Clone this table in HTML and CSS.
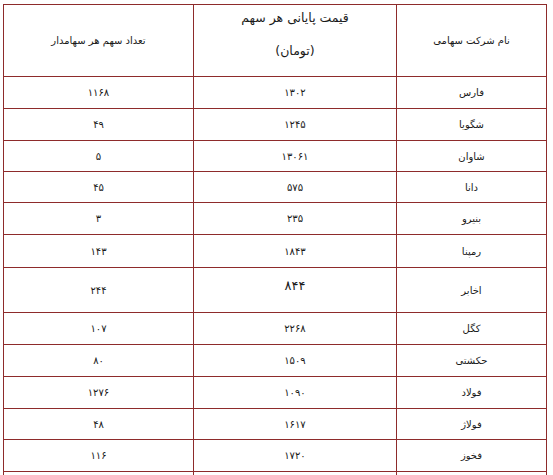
FILE: index.html
```html
<!DOCTYPE html>
<html lang="fa" dir="rtl">
<head>
<meta charset="utf-8">
<link rel="stylesheet" href="styles.css">
</head>
<body>
<table class="grid">
  <colgroup>
    <col class="c-name">
    <col class="c-price">
    <col class="c-count">
  </colgroup>
  <thead>
    <tr class="head">
      <th>نام شرکت سهامی</th>
      <th class="big">
        <p class="l1">قیمت پایانی هر سهم</p>
        <p class="l2">(تومان)</p>
      </th>
      <th>تعداد سهم هر سهامدار</th>
    </tr>
  </thead>
  <tbody>
    <tr class="r32"><td>فارس</td><td class="num">۱۳۰۲</td><td class="num">۱۱۶۸</td></tr>
    <tr class="r32"><td>شگویا</td><td class="num">۱۲۴۵</td><td class="num">۴۹</td></tr>
    <tr class="r31"><td>شاوان</td><td class="num">۱۳۰۶۱</td><td class="num">۵</td></tr>
    <tr class="r31"><td>دانا</td><td class="num">۵۷۵</td><td class="num">۴۵</td></tr>
    <tr class="r32"><td>بنیرو</td><td class="num">۲۳۵</td><td class="num">۳</td></tr>
    <tr class="r33"><td>رمپنا</td><td class="num">۱۸۴۳</td><td class="num">۱۴۳</td></tr>
    <tr class="r45"><td>اخابر</td><td class="num top"><span class="bignum">۸۴۴</span></td><td class="num">۲۴۴</td></tr>
    <tr class="r32"><td>کگل</td><td class="num">۲۲۶۸</td><td class="num">۱۰۷</td></tr>
    <tr class="r32"><td>حکشتی</td><td class="num">۱۵۰۹</td><td class="num">۸۰</td></tr>
    <tr class="r32"><td>فولاد</td><td class="num">۱۰۹۰</td><td class="num">۱۲۷۶</td></tr>
    <tr class="r31"><td>فولاژ</td><td class="num">۱۶۱۷</td><td class="num">۴۸</td></tr>
    <tr class="r32"><td>فخوز</td><td class="num">۱۷۲۰</td><td class="num">۱۱۶</td></tr>
    <tr class="r32"><td>&nbsp;</td><td class="num">&nbsp;</td><td class="num">&nbsp;</td></tr>
  </tbody>
</table>
</body>
</html>
```

FILE: styles.css
```css
html, body {
  margin: 0;
  padding: 0;
  background: #ffffff;
}

body {
  font-family: "DejaVu Sans", "Noto Sans", sans-serif;
  font-size: 10px;
  color: #1a1a1a;
  overflow: hidden;
  height: 475px;
}

.grid {
  direction: rtl;
  border-collapse: collapse;
  margin: 4px 6px 0 4px;
  width: 543px;
  table-layout: fixed;
}

.c-name { width: 150px; }
.c-price { width: 203px; }
.c-count { width: 190px; }

.grid th,
.grid td {
  border: 1px solid #8e2b2b;
  text-align: center;
  vertical-align: middle;
  padding: 0;
  font-weight: normal;
}

.head th {
  height: 71px;
  font-size: 10px;
}

.head th.big {
  font-size: 12.5px;
  vertical-align: top;
}

.head p {
  margin: 0;
}

.head .l1 {
  padding-top: 5px;
  line-height: 16px;
}

.head .l2 {
  padding-top: 17px;
  line-height: 16px;
}

.num {
  font-weight: bold;
  font-size: 10px;
}

.grid td.top {
  vertical-align: top;
}

.bignum {
  display: block;
  font-size: 13px;
  padding-top: 10px;
  line-height: 16px;
}

.r31 td { height: 30px; }
.r32 td { height: 31px; }
.r33 td { height: 32px; }
.r45 td { height: 44px; }
```
